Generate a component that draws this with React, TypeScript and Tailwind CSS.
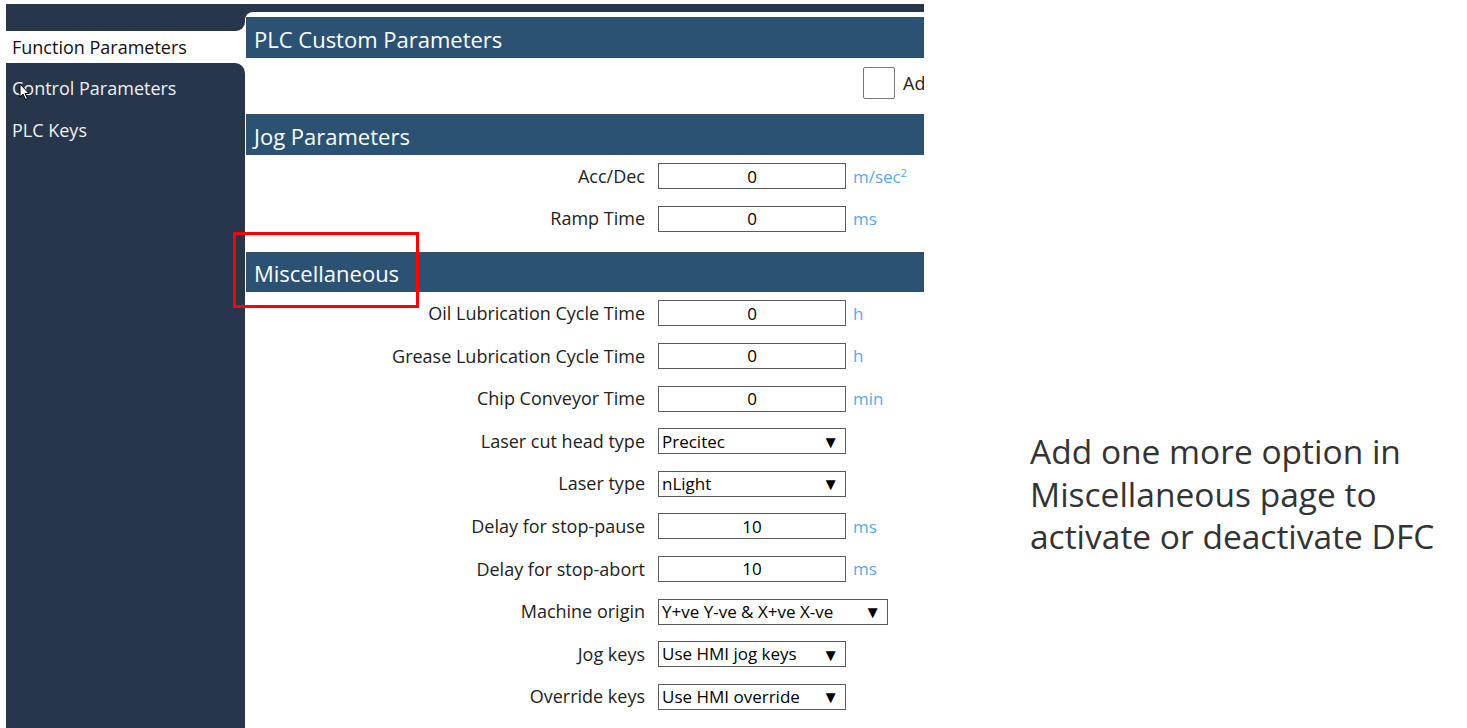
const font = { fontFamily: '"Open Sans", "Noto Sans", sans-serif' };

type Row =
  | { label: string; kind: 'input'; value: string; unit?: string; sup?: boolean }
  | { label: string; kind: 'select'; value: string; wide?: boolean };

const jogRows: Row[] = [
  { label: 'Acc/Dec', kind: 'input', value: '0', unit: 'm/sec', sup: true },
  { label: 'Ramp Time', kind: 'input', value: '0', unit: 'ms' },
];

const miscRows: Row[] = [
  { label: 'Oil Lubrication Cycle Time', kind: 'input', value: '0', unit: 'h' },
  { label: 'Grease Lubrication Cycle Time', kind: 'input', value: '0', unit: 'h' },
  { label: 'Chip Conveyor Time', kind: 'input', value: '0', unit: 'min' },
  { label: 'Laser cut head type', kind: 'select', value: 'Precitec' },
  { label: 'Laser type', kind: 'select', value: 'nLight' },
  { label: 'Delay for stop-pause', kind: 'input', value: '10', unit: 'ms' },
  { label: 'Delay for stop-abort', kind: 'input', value: '10', unit: 'ms' },
  { label: 'Machine origin', kind: 'select', value: 'Y+ve Y-ve & X+ve X-ve', wide: true },
  { label: 'Jog keys', kind: 'select', value: 'Use HMI jog keys' },
  { label: 'Override keys', kind: 'select', value: 'Use HMI override' },
];

function SectionHeader({ title, className = '' }: { title: string; className?: string }) {
  return (
    <div className={`ml-[1px] flex items-center bg-[#2c5273] pl-[8px] pt-[3px] text-[22px] text-white whitespace-nowrap ${className}`}>
      {title}
    </div>
  );
}

function ParamRow({ row }: { row: Row }) {
  return (
    <div className="flex h-[42.6px] items-center text-[18px] text-[#222]">
      <div className="w-[400px] shrink-0 text-right whitespace-nowrap">{row.label}</div>
      {row.kind === 'input' ? (
        <>
          <div className="ml-[13px] flex h-[26px] w-[188px] shrink-0 items-center justify-center border border-[#5a5a5a] bg-white text-[17px] text-black">
            {row.value}
          </div>
          {row.unit && (
            <div className="ml-[7px] whitespace-nowrap text-[17px] text-[#5aa8ec]">
              {row.unit}
              {row.sup && <sup className="text-[11px]">2</sup>}
            </div>
          )}
        </>
      ) : (
        <div
          className={`ml-[13px] flex h-[26px] shrink-0 items-center justify-between border border-[#5a5a5a] bg-white pl-[3px] pr-[6px] text-[17px] text-black ${
            row.wide ? 'w-[230px]' : 'w-[188px]'
          }`}
        >
          <span className="whitespace-nowrap">{row.value}</span>
          <span className="text-[17px] leading-none text-black">▼</span>
        </div>
      )}
    </div>
  );
}

export default function App() {
  return (
    <div className="relative flex h-[728px] w-[1467px] overflow-hidden bg-white" style={font}>
      {/* Window frame */}
      <div className="ml-[6px] mt-[4px] flex h-[724px] w-[918px] shrink-0 bg-[#27364b]">
        {/* Sidebar */}
        <div className="flex w-[239px] shrink-0 flex-col bg-white">
          <div className="h-[27px] rounded-br-[9px] bg-[#27364b]" />
          <div className="flex h-[32px] items-center pl-[6px] text-[18px] text-[#111] whitespace-nowrap">Function Parameters</div>
          <div className="flex-1 rounded-tr-[10px] bg-[#27364b] pt-[4px] text-[18px] text-[#eef0f4]">
            <div className="flex h-[42px] items-center pl-[6px] whitespace-nowrap">Control Parameters</div>
            <div className="flex h-[42px] items-center pl-[6px]">PLC Keys</div>
          </div>
        </div>

        {/* Main panel */}
        <div className="mt-[8px] flex flex-1 flex-col overflow-hidden rounded-tl-[8px] bg-white pt-[5px]">
          <SectionHeader title="PLC Custom Parameters" className="h-[41px]" />
          <div className="mt-[9px] flex h-[32px] items-center pl-[618px]">
            <div className="h-[32px] w-[32px] shrink-0 rounded-[2px] border border-[#777] bg-white" />
            <span className="ml-[8px] whitespace-nowrap text-[18px] text-[#222]">Ad</span>
          </div>
          <SectionHeader title="Jog Parameters" className="mt-[15px] h-[41px]" />
          {jogRows.map((r) => (
            <ParamRow key={r.label} row={r} />
          ))}
          <SectionHeader title="Miscellaneous" className="mt-[12px] h-[40px]" />
          {miscRows.map((r) => (
            <ParamRow key={r.label} row={r} />
          ))}
        </div>
      </div>

      {/* Note */}
      <div className="ml-[106px] pt-[430px] text-[33.5px] leading-[42.5px] text-[#333] whitespace-nowrap">
        <div>Add one more option in</div>
        <div>Miscellaneous page to</div>
        <div>activate or deactivate DFC</div>
      </div>

      {/* Annotation box */}
      <div className="absolute left-[233px] top-[232px] h-[76px] w-[186px] border-[3px] border-[#ff0000]" />

      {/* Mouse cursor */}
      <svg className="absolute left-[19px] top-[83px]" width="12" height="18" viewBox="0 0 12 18">
        <path d="M1 1 L1 14 L4 11 L6.5 16.5 L8.5 15.5 L6 10.5 L10 10.5 Z" fill="white" stroke="black" strokeWidth="1" />
      </svg>
    </div>
  );
}
